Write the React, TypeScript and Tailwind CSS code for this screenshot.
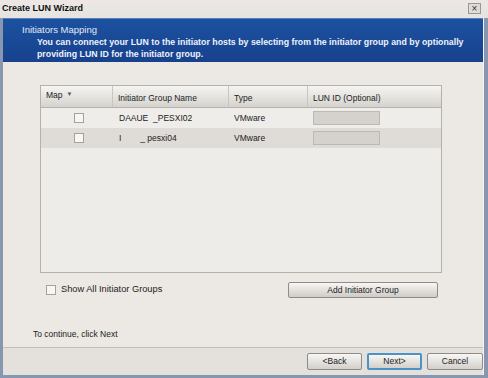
const font = { fontFamily: '"Liberation Sans", Arial, sans-serif' };

const Check = () => (
  <span className="inline-block w-[10px] h-[10px] border border-[#a4a29e] bg-[#f7f6f3]" />
);

const Btn = ({ label, focus, w }: { label: string; focus?: boolean; w: string }) => (
  <button
    className={`${w} h-[17px] text-[8.5px] text-[#222] rounded-[2px] bg-gradient-to-b from-[#f8f7f5] to-[#d3d0cb] ${
      focus ? "border-2 border-[#4a93c8]" : "border border-[#8e8c88]"
    }`}
  >
    {label}
  </button>
);

const rows = [
  { name: "DAAUE  _PESXI02", bg: "bg-[#efede9]" },
  { name: "I        _ pesxi04", bg: "bg-[#dfdcd7]" },
];

export default function App() {
  return (
    <div className="w-[488px] h-[378px] bg-[#8797b0] flex flex-col overflow-hidden" style={font}>
      <div className="h-[18px] shrink-0 flex items-start justify-between bg-gradient-to-b from-[#efe6e6] via-[#e8e6e2] to-[#e6e4e0] pl-[2px] pr-[7px]">
        <span className="text-[9px] leading-[16px] font-bold text-[#111]">Create LUN Wizard</span>
        <span className="mt-[3px] w-[13px] h-[11px] border border-[#9a9894] bg-[#dedcd8] flex items-center justify-center text-[10px] leading-none text-[#333]">
          ×
        </span>
      </div>
      <div className="flex-1 flex flex-col ml-[3px] mr-[4px] mb-[3px] bg-[#ece9e4] border-r border-[#f4f3f0]">
        <div className="h-[44px] shrink-0 bg-gradient-to-b from-[#1c52a0] to-[#17418d] border-t border-[#5b7fb8] pl-[19px] pt-[5px] text-[#eef2fa]">
          <div className="text-[9.5px] leading-[12px] text-[#e3e9f5]">Initiators Mapping</div>
          <div className="pl-[15px] text-[8.8px] leading-[12px] font-bold whitespace-nowrap">
            You can connect your LUN to the initiator hosts by selecting from the initiator group and by optionally
            <br />
            providing LUN ID for the initiator group.
          </div>
        </div>
        <div className="mt-[23px] ml-[37px] w-[402px] h-[188px] border border-[#b4b1ac] bg-[#eeece8] shrink-0">
          <div className="grid grid-cols-[72px_116px_79px_1fr] h-[22px] text-[8.5px] text-[#222] bg-gradient-to-b from-[#f6f5f2] to-[#d6d3ce] border-b border-[#b6b3ae]">
            <div className="flex items-start pt-[3px] pl-[5px] gap-[4px] border-r border-[#c9c6c1]">
              Map <span className="text-[6px] mt-[1px] text-[#555]">▼</span>
            </div>
            <div className="pt-[6px] pl-[5px] border-r border-[#c9c6c1]">Initiator Group Name</div>
            <div className="pt-[6px] pl-[5px] border-r border-[#c9c6c1]">Type</div>
            <div className="pt-[6px] pl-[5px]">LUN ID (Optional)</div>
          </div>
          {rows.map((r) => (
            <div
              key={r.name}
              className={`grid grid-cols-[72px_116px_79px_1fr] h-[20px] items-center text-[8.5px] text-[#222] ${r.bg}`}
            >
              <div className="pl-[33px] flex items-center">
                <Check />
              </div>
              <div className="pl-[6px] whitespace-pre">{r.name}</div>
              <div className="pl-[5px]">VMware</div>
              <div className="pl-[5px]">
                <div className="w-[67px] h-[14px] bg-[#d5d1cc] border border-[#bcb8b2]" />
              </div>
            </div>
          ))}
        </div>
        <div className="flex items-center mt-[9px] ml-[40px] w-[395px] justify-between shrink-0">
          <div className="flex items-center gap-[5px] text-[9.25px] text-[#222] ml-[3px]">
            <Check />
            <span>Show All Initiator Groups</span>
          </div>
          <button className="w-[150px] h-[16px] text-[8.5px] text-[#222] rounded-[2px] border border-[#8e8c88] bg-gradient-to-b from-[#f8f7f5] to-[#cfccc7]">
            Add Initiator Group
          </button>
        </div>
        <div className="mt-[31px] ml-[30px] text-[8.5px] leading-[10px] text-[#222]">To continue, click Next</div>
        <div className="mt-auto h-[28px] border-t border-[#c2bfba] bg-[#e4e1dc] flex items-center justify-end gap-[5px]">
          <Btn label="<Back" w="w-[55px]" />
          <Btn label="Next>" w="w-[55px]" focus />
          <Btn label="Cancel" w="w-[56px]" />
        </div>
      </div>
    </div>
  );
}
